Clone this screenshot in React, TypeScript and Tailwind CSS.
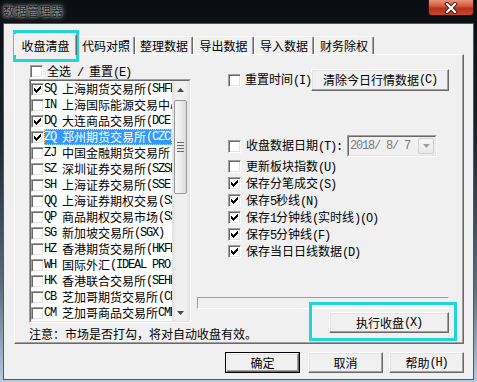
import React from "react";

const ASCII = /^[\x20-\x7e]+$/;

function T({ s }: { s: string }) {
  const parts = s.match(/[\x20-\x7e]+|[^\x20-\x7e]+/g) || [];
  return (
    <>
      {parts.map((p, i) =>
        ASCII.test(p) ? (
          <span
            key={i}
            className="[font-family:'Liberation_Mono',monospace] tracking-[-1.2px] whitespace-pre"
          >
            {p}
          </span>
        ) : (
          <span key={i}>{p}</span>
        )
      )}
    </>
  );
}

function Check() {
  const cols = [2, 3, 4, 3, 2, 1, 0];
  return (
    <svg
      width="7"
      height="7"
      viewBox="0 0 7 7"
      shapeRendering="crispEdges"
      className="absolute left-[2px] top-[2px]"
    >
      {cols.map((y, x) => (
        <rect key={x} x={x} y={y} width="1" height="3" fill="#000" />
      ))}
    </svg>
  );
}

function Cb({ checked = false, className = "" }: { checked?: boolean; className?: string }) {
  return (
    <span
      className={
        "relative inline-block w-[13px] h-[13px] shrink-0 bg-white border border-t-[#a0a0a0] border-l-[#a0a0a0] border-r-white border-b-white shadow-[inset_1px_1px_0_#696969,inset_-1px_-1px_0_#e3e3e3] " +
        className
      }
    >
      {checked && <Check />}
    </span>
  );
}

function Btn({ children, className = "" }: { children: React.ReactNode; className?: string }) {
  return (
    <div
      className={
        "flex items-center justify-center bg-[#f0f0f0] border border-t-white border-l-white border-r-[#696969] border-b-[#696969] shadow-[inset_-1px_-1px_0_#a0a0a0,inset_1px_1px_0_#e3e3e3] shrink-0 " +
        className
      }
    >
      {children}
    </div>
  );
}

const items: [string, string, boolean][] = [
  ["SQ", "上海期货交易所(SHFE)", true],
  ["IN", "上海国际能源交易中心", false],
  ["DQ", "大连商品交易所(DCE)", true],
  ["ZQ", "郑州期货交易所(CZCE)", true],
  ["ZJ", "中国金融期货交易所", false],
  ["SZ", "深圳证券交易所(SZSE)", false],
  ["SH", "上海证券交易所(SSE)", false],
  ["QQ", "上海证券期权交易(SSE)", false],
  ["QP", "商品期权交易市场(SSE)", false],
  ["SG", "新加坡交易所(SGX)", false],
  ["HZ", "香港期货交易所(HKFE)", false],
  ["WH", "国际外汇(IDEAL PRO)", false],
  ["HK", "香港联合交易所(SEHK)", false],
  ["CB", "芝加哥期货交易所(CBOT)", false],
  ["CM", "芝加哥商品交易所CME", false],
];

const rightRows: [string, boolean][] = [
  ["更新板块指数(U)", false],
  ["保存分笔成交(S)", true],
  ["保存5秒线(N)", true],
  ["保存1分钟线(实时线)(O)", true],
  ["保存5分钟线(F)", true],
  ["保存当日日线数据(D)", true],
];

const tabs: [string, string][] = [
  ["代码对照", "w-[58px]"],
  ["整理数据", "w-[58px]"],
  ["导出数据", "w-[61px]"],
  ["导入数据", "w-[60px]"],
  ["财务除权", "w-[60px]"],
];

export default function App() {
  return (
    <div className="relative w-[477px] h-[382px] overflow-hidden flex flex-col bg-[linear-gradient(180deg,#0a0d11_0%,#1a222b_35%,#5b6d80_75%,#b4cbe0_100%)] [font-family:'Noto_Sans_CJK_SC',sans-serif] text-[12px] leading-[14px] text-black">
      {/* title bar */}
      <div className="h-[23px] shrink-0 flex items-start justify-between bg-[radial-gradient(ellipse_56px_16px_at_34px_11px,rgba(200,204,208,0.8),rgba(120,126,132,0.35)_60%,transparent),radial-gradient(ellipse_70px_24px_at_405px_18px,rgba(70,110,130,0.45),transparent),#0b0f14]">
        <span className="ml-[3px] mt-[4px] text-[#161616] [text-shadow:0_0_2px_rgba(255,255,255,0.9),0_0_6px_rgba(255,255,255,0.7)]">
          数据管理器
        </span>
        <div className="mr-[3px] w-[46px] h-[16px] rounded-b-[4px] border border-t-0 border-[#3e1007] bg-[linear-gradient(180deg,#e8937d_0%,#d25a3d_40%,#b8321a_55%,#c24a2e_100%)] flex items-center justify-center">
          <svg width="14" height="12" viewBox="0 0 14 12">
            <path d="M3 2 L11 10 M11 2 L3 10" stroke="#3a1a14" strokeWidth="4" strokeLinecap="square" />
            <path d="M3 2 L11 10 M11 2 L3 10" stroke="#ffffff" strokeWidth="2.2" strokeLinecap="square" />
          </svg>
        </div>
      </div>

      {/* client */}
      <div className="mx-[3px] h-[357px] shrink-0 bg-[#f0f0f0] border border-[#4d5966] flex flex-col pl-[10px] pt-[10px]">
        {/* tabs */}
        <div className="flex items-end h-[20px]">
          <div className="relative z-10 w-[63px] h-[21px] -mb-[1px] bg-[#f0f0f0] border-t border-l border-white border-r border-r-[#696969] shadow-[inset_-1px_0_0_#a0a0a0] rounded-t-[2px] flex justify-center pt-[4px]">
            收盘清盘
          </div>
          {tabs.map(([t, w]) => (
            <div
              key={t}
              className={
                "h-[18px] bg-[#f0f0f0] border-t border-l border-white border-r border-r-[#696969] shadow-[inset_-1px_0_0_#a0a0a0] rounded-t-[2px] flex justify-center pt-[2px] " +
                w
              }
            >
              {t}
            </div>
          ))}
        </div>

        {/* panel */}
        <div className="w-[450px] h-[290px] shrink-0 border-t border-l border-white border-r border-b border-r-[#696969] border-b-[#696969] shadow-[inset_-1px_-1px_0_#a0a0a0] flex">
          {/* left column */}
          <div className="ml-[14px] w-[162px] flex flex-col pt-[10px] shrink-0">
            <div className="flex items-center h-[13px]">
              <Cb className="ml-[1px]" />
              <span className="ml-[4px] whitespace-nowrap">
                <T s="全选 / 重置(E)" />
              </span>
            </div>
            <div className="mt-[1px] w-[162px] h-[244px] border border-t-[#a0a0a0] border-l-[#a0a0a0] border-r-white border-b-white">
              <div className="w-full h-full border border-t-[#696969] border-l-[#696969] border-r-[#e3e3e3] border-b-[#e3e3e3] bg-white flex">
                <div className="w-[141px] flex flex-col overflow-hidden">
                  {items.map(([code, name, checked], i) => {
                    const sel = i === 3;
                    return (
                      <div key={code} className="flex items-center h-[16px] shrink-0">
                        <Cb checked={checked} />
                        <div
                          className={
                            sel
                              ? "flex-1 h-[16px] flex items-center whitespace-nowrap overflow-hidden bg-[#3399ff] text-white outline-1 outline-dotted outline-[#f3c98a] -outline-offset-1"
                              : "flex-1 h-[16px] flex items-center whitespace-nowrap overflow-hidden"
                          }
                        >
                          <T s={code + " " + name} />
                        </div>
                      </div>
                    );
                  })}
                </div>
                {/* scrollbar */}
                <div className="w-[17px] h-full flex flex-col bg-[linear-gradient(90deg,#e2e2e2_0%,#efefef_25%,#f0f0f0_75%,#e6e6e6_100%)]">
                  <div className="h-[17px] flex items-center justify-center">
                    <svg width="7" height="4" viewBox="0 0 7 4">
                      <path d="M0 4 L3.5 0 L7 4Z" fill="#4a4a4a" />
                    </svg>
                  </div>
                  <div className="flex-1 flex flex-col">
                    <div className="mt-[2px] mx-[2px] h-[94px] rounded-[2px] border border-[#9a9a9a] bg-[linear-gradient(90deg,#f6f6f6_0%,#ececec_50%,#dadada_100%)] flex flex-col items-center justify-center gap-[2px]">
                      <div className="w-[7px] h-[1px] bg-[#6a6a6a]" />
                      <div className="w-[7px] h-[1px] bg-[#6a6a6a]" />
                      <div className="w-[7px] h-[1px] bg-[#6a6a6a]" />
                      <div className="w-[7px] h-[1px] bg-[#6a6a6a]" />
                    </div>
                  </div>
                  <div className="h-[17px] flex items-center justify-center">
                    <svg width="7" height="4" viewBox="0 0 7 4">
                      <path d="M0 0 L3.5 4 L7 0Z" fill="#4a4a4a" />
                    </svg>
                  </div>
                </div>
              </div>
            </div>
            <div className="mt-[4px] whitespace-nowrap">注意：市场是否打勾，将对自动收盘有效。</div>
          </div>

          {/* right column */}
          <div className="ml-[6px] w-[252px] shrink-0 flex flex-col pt-[14px]">
            <div className="flex items-center h-[22px]">
              <Cb className="ml-[31px]" />
              <span className="ml-[4px] whitespace-nowrap">
                <T s="重置时间(I)" />
              </span>
              <Btn className="ml-auto w-[138px] h-[22px]">
                <T s="清除今日行情数据(C)" />
              </Btn>
            </div>

            <div className="mt-[44px] flex items-center h-[22px]">
              <Cb className="ml-[31px]" />
              <span className="ml-[5px] whitespace-nowrap">
                <T s="收盘数据日期(T):" />
              </span>
              <div className="ml-[5px] w-[90px] h-[22px] border border-t-[#a0a0a0] border-l-[#a0a0a0] border-r-white border-b-white">
                <div className="w-full h-full border border-t-[#696969] border-l-[#696969] border-r-[#e3e3e3] border-b-[#e3e3e3] flex items-center pl-[1px] text-[#7a7a7a] bg-[#f0f0f0]">
                  <T s="2018/ 8/ 7" />
                  <div className="ml-auto mr-[1px] w-[16px] h-[16px] rounded-[2px] border border-[#d0d0d0] bg-[linear-gradient(180deg,#f7f7f7,#e9e9e9)] flex items-center justify-center">
                    <svg width="7" height="4" viewBox="0 0 7 4">
                      <path d="M0 0 L3.5 4 L7 0Z" fill="#a0a0a0" />
                    </svg>
                  </div>
                </div>
              </div>
            </div>

            <div className="mt-[1px] flex flex-col">
              {rightRows.map(([label, checked]) => (
                <div key={label} className="flex items-center h-[17px]">
                  <Cb checked={checked} className="ml-[31px]" />
                  <span className="ml-[5px] whitespace-nowrap">
                    <T s={label} />
                  </span>
                </div>
              ))}
            </div>

            <div className="mt-[37px] w-full h-[12px] border border-t-[#a0a0a0] border-l-[#a0a0a0] border-r-white border-b-white" />

            <Btn className="mt-[3px] self-end w-[120px] h-[21px]">
              <T s="执行收盘(X)" />
            </Btn>
          </div>
        </div>

        {/* bottom buttons */}
        <div className="mt-[8px] w-[450px] flex justify-end">
          <div className="w-[75px] h-[21px] border border-black flex">
            <Btn className="w-full h-full">确定</Btn>
          </div>
          <Btn className="ml-[8px] w-[75px] h-[21px]">取消</Btn>
          <Btn className="ml-[6px] w-[75px] h-[21px]">
            <T s="帮助(H)" />
          </Btn>
        </div>
      </div>

      {/* annotation highlights */}
      <div className="absolute left-[13px] top-[30px] w-[66px] h-[32px] border-[3px] border-[#1ed6d8] pointer-events-none" />
      <div className="absolute left-[309px] top-[302px] w-[148px] h-[39px] border-[3px] border-[#1ed6d8] pointer-events-none" />
    </div>
  );
}
